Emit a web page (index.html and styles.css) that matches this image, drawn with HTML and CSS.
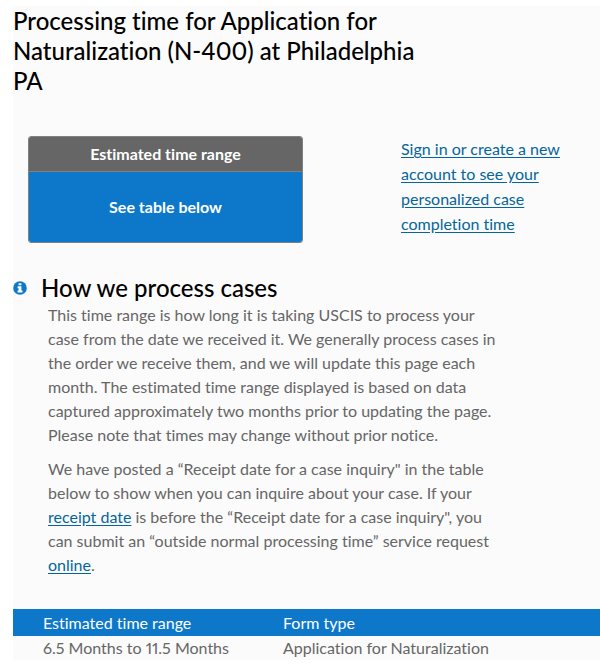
FILE: index.html
```html
<!DOCTYPE html>
<html lang="en">

<head>
    <title>Case Processing Times</title>
    <meta charset="UTF-8">
    <meta name="viewport" content="width=device-width, initial-scale=1.0">
    <link rel="stylesheet" href="styles.css">
</head>

<body>
    <main class="results">
        <h1>Processing time for Application for Naturalization (N-400) at Philadelphia PA</h1>

        <div class="summary">
            <div class="time-box">
                <div class="time-box-title">Estimated time range</div>
                <div class="time-box-value">See table below</div>
            </div>
            <a class="sign-in" href="#">Sign in or create a new account to see your personalized case completion time</a>
        </div>

        <section class="info">
            <div class="info-header">
                <svg class="info-icon" viewBox="0 0 14 14" aria-hidden="true">
                    <circle cx="7" cy="7" r="6.8" fill="#0d78c9"/>
                    <path d="M5.6 2.2h2.8v2H5.6zM4.6 5.3h3.8v4.3h1.1v2H4.6v-2h1V7.3h-1z" fill="#fff"/>
                </svg>
                <h2>How we process cases</h2>
            </div>
            <div class="info-text">
                <p>This time range is how long it is taking USCIS to process your case from the date we received it. We generally process cases in the order we receive them, and we will update this page each month. The estimated time range displayed is based on data captured approximately two months prior to updating the page. Please note that times may change without prior notice.</p>
                <p>We have posted a “Receipt date for a case inquiry" in the table below to show when you can inquire about your case. If your <a href="#">receipt date</a> is before the “Receipt date for a case inquiry", you can submit an “outside normal processing time” service request <a href="#">online</a>.</p>
            </div>
        </section>

        <table>
            <thead>
                <tr>
                    <th>Estimated time range</th>
                    <th>Form type</th>
                </tr>
            </thead>
            <tbody>
                <tr>
                    <td>6.5 Months to 11.5 Months</td>
                    <td>Application for Naturalization</td>
                </tr>
            </tbody>
        </table>
    </main>
</body>

</html>
```

FILE: styles.css
```css
body {
    margin: 0;
    padding: 6px 0 9px 13px;
    background: #fff;
    color: #666;
    font-family: Lato, "Liberation Sans", sans-serif;
    font-size: 16px;
    font-variant-ligatures: none;
    font-variant-numeric: proportional-nums;
    line-height: 24px;
}
.results {
    background: #fbfbfb;
}
h1,
h2 {
    margin: 0;
    color: #000;
    font-family: "Lato Medium", Lato, "Liberation Sans", sans-serif;
    font-size: 24px;
    font-weight: 500;
    line-height: 30px;
}
h1 {
    max-width: 420px;
}
a {
    color: #04669a;
    text-underline-offset: 2px;
}
.summary {
    display: flex;
    justify-content: space-between;
    padding: 40px 31px 0 15px;
}
.time-box {
    box-sizing: border-box;
    width: 275px;
    height: 107px;
    display: flex;
    flex-direction: column;
    border: 1px solid #808080;
    border-radius: 3px;
    overflow: hidden;
    color: #fff;
    font-weight: bold;
    text-align: center;
}
.time-box-title {
    padding: 5px;
    background: #666;
    border-bottom: 1px solid #808080;
}
.time-box-value {
    flex: 1;
    display: flex;
    align-items: center;
    justify-content: center;
    background: #0d78c9;
}
.sign-in {
    width: 168px;
    line-height: 25px;
}
.info {
    padding: 30px 0 22px;
}
.info-header {
    display: flex;
    align-items: center;
    gap: 14px;
}
.info-icon {
    width: 14px;
    height: 14px;
}
.info-text {
    max-width: 460px;
    padding-left: 35px;
}
.info-text p {
    margin: 0 0 10px;
}
table {
    width: 100%;
    border-collapse: collapse;
    table-layout: fixed;
}
th,
td {
    padding: 0 0 0 30px;
    text-align: left;
}
th:first-child {
    width: 210px;
}
th {
    height: 27px;
    background: #0d78c9;
    color: #fff;
    font-weight: normal;
}
```
